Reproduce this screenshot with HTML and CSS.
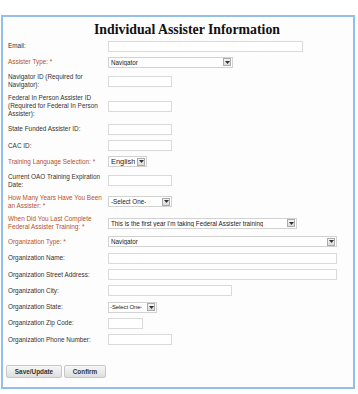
FILE: index.html
```html
<!DOCTYPE html>
<html>
	<head>
		<meta charset="utf-8">
		<title>Individual Assister Information</title>
		<link rel="stylesheet" href="styles.css">
	</head>
	<body>
		<div class="panel">
			<h1 class="title">Individual Assister Information</h1>
			<div class="form">
				<div class="row"><label class="lbl">Email:</label><input class="txt w195" type="text"></div>
				<div class="row"><label class="lbl req">Assister Type: *</label>
					<div class="sel w125"><span>Navigator</span><i class="arr"><svg width="5" height="3" viewBox="0 0 5 3"><path d="M0 0H5L2.5 3Z"/></svg></i></div></div>
				<div class="row"><label class="lbl">Navigator ID (Required for<br>Navigator):</label><input class="txt w64" type="text"></div>
				<div class="row"><label class="lbl">Federal In Person Assister ID<br>(Required for Federal In Person<br>Assister):</label><input class="txt w64" type="text"></div>
				<div class="row"><label class="lbl">State Funded Assister ID:</label><input class="txt w64" type="text"></div>
				<div class="row"><label class="lbl">CAC ID:</label><input class="txt w64" type="text"></div>
				<div class="row"><label class="lbl req">Training Language Selection: *</label>
					<div class="sel w39 big"><span>English</span><i class="arr"><svg width="5" height="3" viewBox="0 0 5 3"><path d="M0 0H5L2.5 3Z"/></svg></i></div></div>
				<div class="row"><label class="lbl">Current OAO Training Expiration<br>Date:</label><input class="txt w64" type="text"></div>
				<div class="row"><label class="lbl req">How Many Years Have You Been<br>an Assister: *</label>
					<div class="sel w64"><span>-Select One-</span><i class="arr"><svg width="5" height="3" viewBox="0 0 5 3"><path d="M0 0H5L2.5 3Z"/></svg></i></div></div>
				<div class="row"><label class="lbl req">When Did You Last Complete<br>Federal Assister Training: *</label>
					<div class="sel w189"><span>This is the first year I'm taking Federal Assister training</span><i class="arr"><svg width="5" height="3" viewBox="0 0 5 3"><path d="M0 0H5L2.5 3Z"/></svg></i></div></div>
				<div class="row"><label class="lbl req">Organization Type: *</label>
					<div class="sel w229"><span>Navigator</span><i class="arr"><svg width="5" height="3" viewBox="0 0 5 3"><path d="M0 0H5L2.5 3Z"/></svg></i></div></div>
				<div class="row"><label class="lbl">Organization Name:</label><input class="txt w229" type="text"></div>
				<div class="row"><label class="lbl">Organization Street Address:</label><input class="txt w229" type="text"></div>
				<div class="row"><label class="lbl">Organization City:</label><input class="txt w124" type="text"></div>
				<div class="row"><label class="lbl">Organization State:</label>
					<div class="sel w49 tight"><span>-Select One-</span><i class="arr"><svg width="5" height="3" viewBox="0 0 5 3"><path d="M0 0H5L2.5 3Z"/></svg></i></div></div>
				<div class="row"><label class="lbl">Organization Zip Code:</label><input class="txt w35" type="text"></div>
				<div class="row"><label class="lbl">Organization Phone Number:</label><input class="txt w64" type="text"></div>
			</div>
			<div class="actions">
				<button class="btn save">Save/Update</button>
				<button class="btn confirm">Confirm</button>
			</div>
		</div>
	</body>
</html>
```

FILE: styles.css
```css
*{
	margin: 0;
	padding: 0;
	box-sizing: border-box;
}
body{
	background: #fff;
	font-family: "Liberation Sans", Arial, sans-serif;
	color: #333;
}
.panel{
	margin: 15px 3px 0 1px;
	height: 374px;
	border: 2px solid #93bfea;
	background: #fdfdfd;
	padding: 0 0 0 5px;
}
.title{
	font-family: "Liberation Serif", "Times New Roman", serif;
	font-size: 13.8px;
	font-weight: bold;
	color: #111;
	text-align: center;
	padding: 5px 0 0 13px;
	line-height: 16px;
	height: 21px;
}
.row{
	display: grid;
	grid-template-columns: 100px auto;
	justify-content: start;
	align-items: center;
	padding: 2.65px 0;
	min-height: 16px;
}
.lbl{
	font-size: 6.4px;
	line-height: 8px;
	color: #333;
}
.lbl.req{
	color: #b6522c;
}
.txt{
	height: 11px;
	border: 1px solid #dadada;
	background: #fff;
}
.sel{
	height: 11px;
	border: 1px solid #d2d2d2;
	background: #fff;
	display: flex;
	align-items: center;
	justify-content: space-between;
	padding: 0 1px 0 2px;
	font-size: 6.3px;
	color: #222;
	overflow: hidden;
	white-space: nowrap;
}
.sel.big{
	font-size: 7.4px;
}
.sel.tight{
	padding-left: 1px;
	font-size: 6px;
	letter-spacing: -0.1px;
}
.sel span{
	overflow: hidden;
}
.arr{
	flex: none;
	width: 8px;
	height: 8px;
	border: 1px solid #aaa;
	background: linear-gradient(#f4f4f4, #dcdcdc);
	display: flex;
	align-items: center;
	justify-content: center;
	margin-left: 1px;
}
.arr svg{
	fill: #333;
}
.w35{ width: 35px; }
.w39{ width: 39px; }
.w49{ width: 49px; }
.w64{ width: 64px; }
.w124{ width: 124px; }
.w125{ width: 125px; }
.w189{ width: 189px; }
.w195{ width: 195px; }
.w229{ width: 229px; }
.actions{
	display: flex;
	gap: 2px;
	padding: 17px 0 0 0;
	margin-left: -2px;
}
.btn{
	height: 13px;
	border: 1px solid #c8c8c8;
	border-radius: 2px;
	background: linear-gradient(#f7f7f7, #dedede);
	font-family: "Liberation Sans", Arial, sans-serif;
	font-size: 6.4px;
	font-weight: bold;
	color: #333;
}
.save{ width: 56px; }
.confirm{ width: 42px; }
```
